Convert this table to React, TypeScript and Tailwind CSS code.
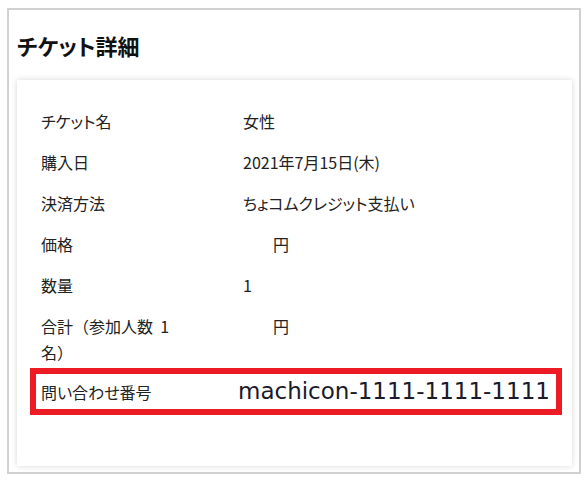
import React from 'react';

interface Row {
  label: React.ReactNode;
  value: React.ReactNode;
  plain?: boolean;
}

const rows: Row[] = [
  { label: 'チケット名', value: '女性' },
  { label: '購入日', value: '2021年7月15日(木)' },
  { label: '決済方法', value: 'ちょコムクレジット支払い' },
  { label: '価格', value: <span className="pl-[30px]">円</span> },
  { label: '数量', value: '1' },
  {
    label: (
      <>
        合計（参加人数&nbsp;&nbsp;1
        <br />
        名）
      </>
    ),
    value: <span className="pl-[30px]">円</span>,
    plain: true,
  },
];

export default function App() {
  return (
    <div className="min-h-[480px] bg-white pt-[8px] pl-[7px] font-['Noto_Sans_CJK_JP',sans-serif] text-[#222] [font-feature-settings:'palt']">
      <div className="flex h-[466px] w-[574px] flex-col border-2 border-[#d0d0d0] pb-[6px] pl-[8px] pr-[7px]">
        <div className="flex h-[70px] items-center text-[22px] font-bold text-[#111]">チケット詳細</div>
        <div className="flex-1 bg-white pl-[24px] pr-[10px] pt-[21px] shadow-[0_0_6px_rgba(0,0,0,0.16)]">
          {rows.map((row, i) => (
            <div key={i} className="flex py-[7px] text-[16px] leading-[27px]">
              <div
                className={
                  row.plain
                    ? 'w-[202px] shrink-0 leading-[26px] [font-feature-settings:normal]'
                    : 'w-[202px] shrink-0'
                }
              >
                {row.label}
              </div>
              <div>{row.value}</div>
            </div>
          ))}
          <div className="-ml-[11px] -mt-[4px] flex h-[47px] items-center border-[6px] border-[#ed1c24] pl-[5px]">
            <div className="w-[197px] shrink-0 text-[16px]">問い合わせ番号</div>
            <div className="font-['DejaVu_Sans',sans-serif] text-[23px] text-[#1a1a2a]">
              machicon-1111-1111-1111
            </div>
          </div>
        </div>
      </div>
    </div>
  );
}
